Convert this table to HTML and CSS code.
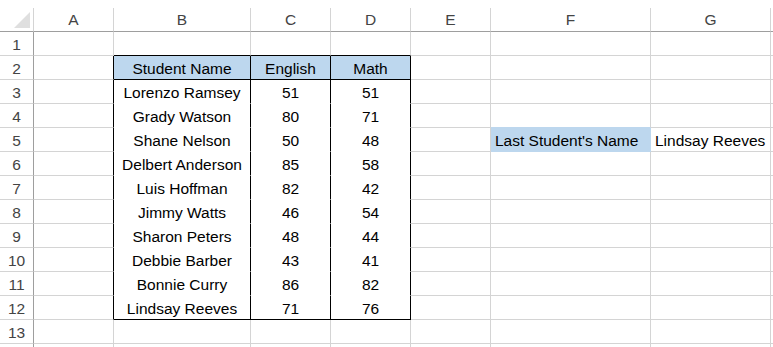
FILE: index.html
```html
<!DOCTYPE html>
<html>
<head>
<meta charset="utf-8">
<link rel="stylesheet" href="styles.css">
</head>
<body>
<div class="sheet">
  <div class="c h corner"><svg width="16" height="16" viewBox="0 0 16 16"><polygon points="16,0 16,16 0,16" fill="#dfdfdf"/></svg></div>
  <div class="c h">A</div><div class="c h">B</div><div class="c h">C</div><div class="c h">D</div><div class="c h">E</div><div class="c h">F</div><div class="c h">G</div><div class="c h end"></div>

  <div class="c r">1</div><div class="c"></div><div class="c bb"></div><div class="c bb"></div><div class="c bb"></div><div class="c"></div><div class="c"></div><div class="c"></div><div class="c end"></div>

  <div class="c r">2</div><div class="c rb"></div><div class="c th rb bb">Student Name</div><div class="c th rb bb">English</div><div class="c th rb bb">Math</div><div class="c"></div><div class="c"></div><div class="c"></div><div class="c end"></div>

  <div class="c r">3</div><div class="c rb"></div><div class="c td rb nb">Lorenzo Ramsey</div><div class="c td rb nb">51</div><div class="c td rb nb">51</div><div class="c"></div><div class="c"></div><div class="c"></div><div class="c end"></div>

  <div class="c r">4</div><div class="c rb"></div><div class="c td rb nb">Grady Watson</div><div class="c td rb nb">80</div><div class="c td rb nb">71</div><div class="c"></div><div class="c fb"></div><div class="c"></div><div class="c end"></div>

  <div class="c r">5</div><div class="c rb"></div><div class="c td rb nb">Shane Nelson</div><div class="c td rb nb">50</div><div class="c td rb nb">48</div><div class="c"></div><div class="c tl fill">Last Student's Name</div><div class="c tl">Lindsay Reeves</div><div class="c end"></div>

  <div class="c r">6</div><div class="c rb"></div><div class="c td rb nb">Delbert Anderson</div><div class="c td rb nb">85</div><div class="c td rb nb">58</div><div class="c"></div><div class="c"></div><div class="c"></div><div class="c end"></div>

  <div class="c r">7</div><div class="c rb"></div><div class="c td rb nb">Luis Hoffman</div><div class="c td rb nb">82</div><div class="c td rb nb">42</div><div class="c"></div><div class="c"></div><div class="c"></div><div class="c end"></div>

  <div class="c r">8</div><div class="c rb"></div><div class="c td rb nb">Jimmy Watts</div><div class="c td rb nb">46</div><div class="c td rb nb">54</div><div class="c"></div><div class="c"></div><div class="c"></div><div class="c end"></div>

  <div class="c r">9</div><div class="c rb"></div><div class="c td rb nb">Sharon Peters</div><div class="c td rb nb">48</div><div class="c td rb nb">44</div><div class="c"></div><div class="c"></div><div class="c"></div><div class="c end"></div>

  <div class="c r">10</div><div class="c rb"></div><div class="c td rb nb">Debbie Barber</div><div class="c td rb nb">43</div><div class="c td rb nb">41</div><div class="c"></div><div class="c"></div><div class="c"></div><div class="c end"></div>

  <div class="c r">11</div><div class="c rb"></div><div class="c td rb nb">Bonnie Curry</div><div class="c td rb nb">86</div><div class="c td rb nb">82</div><div class="c"></div><div class="c"></div><div class="c"></div><div class="c end"></div>

  <div class="c r">12</div><div class="c rb"></div><div class="c td rb bb">Lindsay Reeves</div><div class="c td rb bb">71</div><div class="c td rb bb">76</div><div class="c"></div><div class="c"></div><div class="c"></div><div class="c end"></div>

  <div class="c r">13</div><div class="c"></div><div class="c"></div><div class="c"></div><div class="c"></div><div class="c"></div><div class="c"></div><div class="c"></div><div class="c end"></div>

  <div class="c r last"></div><div class="c last"></div><div class="c last"></div><div class="c last"></div><div class="c last"></div><div class="c last"></div><div class="c last"></div><div class="c last"></div><div class="c end last"></div>
</div>
</body>
</html>
```
FILE: styles.css
```css
html, body {
  margin: 0;
  padding: 0;
  background: #ffffff;
}
.sheet {
  display: grid;
  grid-template-columns: 34px 80px 137px 80px 80px 80px 160px 120px 2px;
  grid-template-rows: 32px repeat(13, 24px) 3px;
  width: 773px;
  height: 347px;
  overflow: hidden;
  font-family: "Liberation Sans", Arial, sans-serif;
  font-size: 15.5px;
  color: #000;
}
.c {
  box-sizing: border-box;
  border-right: 1px solid #d4d4d4;
  border-bottom: 1px solid #d4d4d4;
  display: flex;
  align-items: center;
  justify-content: center;
  white-space: nowrap;
  padding-top: 2px;
}
.h {
  margin-top: 8px;
  border-bottom-color: #9e9e9e;
  color: #444;
  padding-top: 0;
}
.corner {
  justify-content: flex-end;
  align-items: flex-end;
  padding: 0 3px 3px 0;
}
.corner svg {
  display: block;
}
.r {
  border-right-color: #9e9e9e;
  color: #444;
}
.end {
  border-right: none;
}
.last {
  border-bottom: none;
}
.rb {
  border-right-color: #000;
}
.bb {
  border-bottom-color: #000;
}
.nb {
  border-bottom-color: #ffffff;
}
.th {
  background: #bdd7ee;
}
.tl {
  justify-content: flex-start;
  padding-left: 4px;
}
.fill {
  background: #bdd7ee;
  border-right-color: #bdd7ee;
  border-bottom-color: #bdd7ee;
}
.fb {
  border-bottom-color: #bdd7ee;
}
```
